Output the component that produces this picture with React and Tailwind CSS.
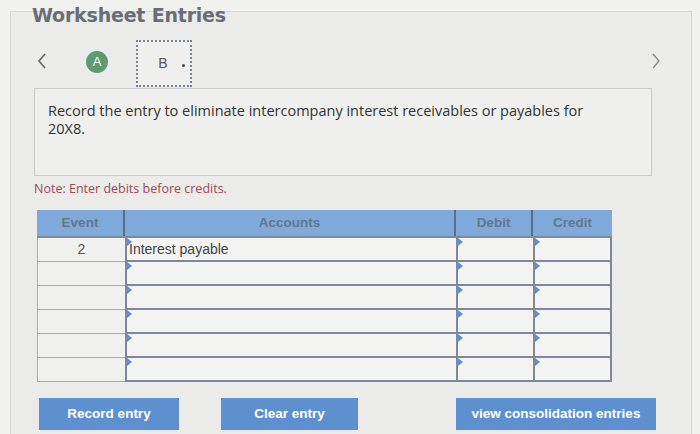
import React from 'react';

const rows = [
  { event: '2', account: 'Interest payable' },
  { event: '', account: '' },
  { event: '', account: '' },
  { event: '', account: '' },
  { event: '', account: '' },
  { event: '', account: '' },
];

const Marker = () => (
  <span className="absolute left-0 top-0 w-0 h-0 border-t-[4px] border-b-[4px] border-l-[5px] border-t-transparent border-b-transparent border-l-[#5b8ed6]" />
);

const InputCell = ({ width, children, last }) => (
  <div
    className={`relative h-full border-l-2 border-b-2 border-[#7d889a] bg-[#f3f3f1] ${last ? 'border-r-2' : ''}`}
    style={{ width }}
  >
    <Marker />
    {children}
  </div>
);

export default function App() {
  return (
    <div className="w-[700px] h-[434px] overflow-hidden bg-[#f1f1ef] pt-[11px]" style={{ fontFamily: '"Liberation Sans", Arial, sans-serif' }}>
      <div className="ml-[10px] mr-[8px] h-[440px] border-l border-r border-t border-[#d6d6d4] bg-[#ebebe9] relative">
        <h1 className="absolute left-[21px] -top-[6px] text-[19px] font-bold text-[#686d74] leading-none tracking-[-0.2px]" style={{ fontFamily: '"DejaVu Sans", Verdana, sans-serif' }}>
          Worksheet Entries
        </h1>

        {/* nav */}
        <div className="flex items-center h-[76px] pt-[26px]">
          <svg width="12" height="18" viewBox="0 0 12 18" className="ml-[25px] -mt-[4px]">
            <path d="M9 2 L3 9 L9 16" fill="none" stroke="#666" strokeWidth="1.6" />
          </svg>
          <div className="ml-[38px] w-[22px] h-[22px] rounded-full bg-[#5d9a72] text-white text-[13px] flex items-center justify-center -mt-[2px]">A</div>
          <div className="ml-[28px] w-[56px] h-[47px] border-2 border-dotted border-[#7a7fa0] flex items-center justify-center relative bg-[#efefed]">
            <span className="text-[14px] text-[#555] ml-[-2px]">B</span>
            <span className="absolute right-[5px] top-[22px] w-[3px] h-[3px] rounded-full bg-[#444]" />
          </div>
          <div className="flex-1" />
          <svg width="12" height="18" viewBox="0 0 12 18" className="mr-[29px] -mt-[4px]">
            <path d="M3 2 L9 9 L3 16" fill="none" stroke="#888" strokeWidth="1.4" />
          </svg>
        </div>

        {/* question */}
        <div className="ml-[23px] w-[618px] h-[88px] border border-[#c9c9c7] bg-[#efefed] pl-[13px] pr-[60px] pt-[13px] text-[14.5px] leading-[18px] text-[#333]" style={{ fontFamily: '"Open Sans", sans-serif' }}>
          Record the entry to eliminate intercompany interest receivables or payables for 20X8.
        </div>

        <p className="ml-[23px] mt-[4px] text-[12.5px] text-[#a0485a]" style={{ fontFamily: '"Open Sans", sans-serif' }}>
          Note: Enter debits before credits.
        </p>

        {/* table */}
        <div className="ml-[26px] mt-[11px] w-[575px]">
          <div className="flex h-[26px] bg-[#80a9db] text-[13.5px] font-bold text-[#687586]">
            <div className="w-[88px] flex items-center justify-center border-r-2 border-[#5b6f8c]">Event</div>
            <div className="w-[331px] flex items-center justify-center border-r-2 border-[#5b6f8c]">Accounts</div>
            <div className="w-[77px] flex items-center justify-center border-r-2 border-[#5b6f8c]">Debit</div>
            <div className="w-[79px] flex items-center justify-center">Credit</div>
          </div>
          <div className="border-t-2 border-[#7d889a]">
            {rows.map((r, i) => (
              <div key={i} className="flex h-[24px]">
                <div className="w-[88px] h-full border-l border-b border-[#a9a9a9] bg-[#f1f1ef] text-[14px] text-[#555] flex items-center justify-center">
                  {r.event}
                </div>
                <InputCell width={331}>
                  <span className="absolute left-[2px] top-[1px] text-[14px] text-[#444]">{r.account}</span>
                </InputCell>
                <InputCell width={77} />
                <InputCell width={79} last />
              </div>
            ))}
          </div>
        </div>

        {/* buttons */}
        <div className="flex mt-[16px] ml-[28px] text-[13.5px] font-bold text-white">
          <button className="w-[140px] h-[32px] bg-[#5e90d0]">Record entry</button>
          <button className="ml-[42px] w-[137px] h-[32px] bg-[#5e90d0]">Clear entry</button>
          <button className="ml-[98px] w-[200px] h-[32px] bg-[#5e90d0]">view consolidation entries</button>
        </div>
      </div>
    </div>
  );
}
